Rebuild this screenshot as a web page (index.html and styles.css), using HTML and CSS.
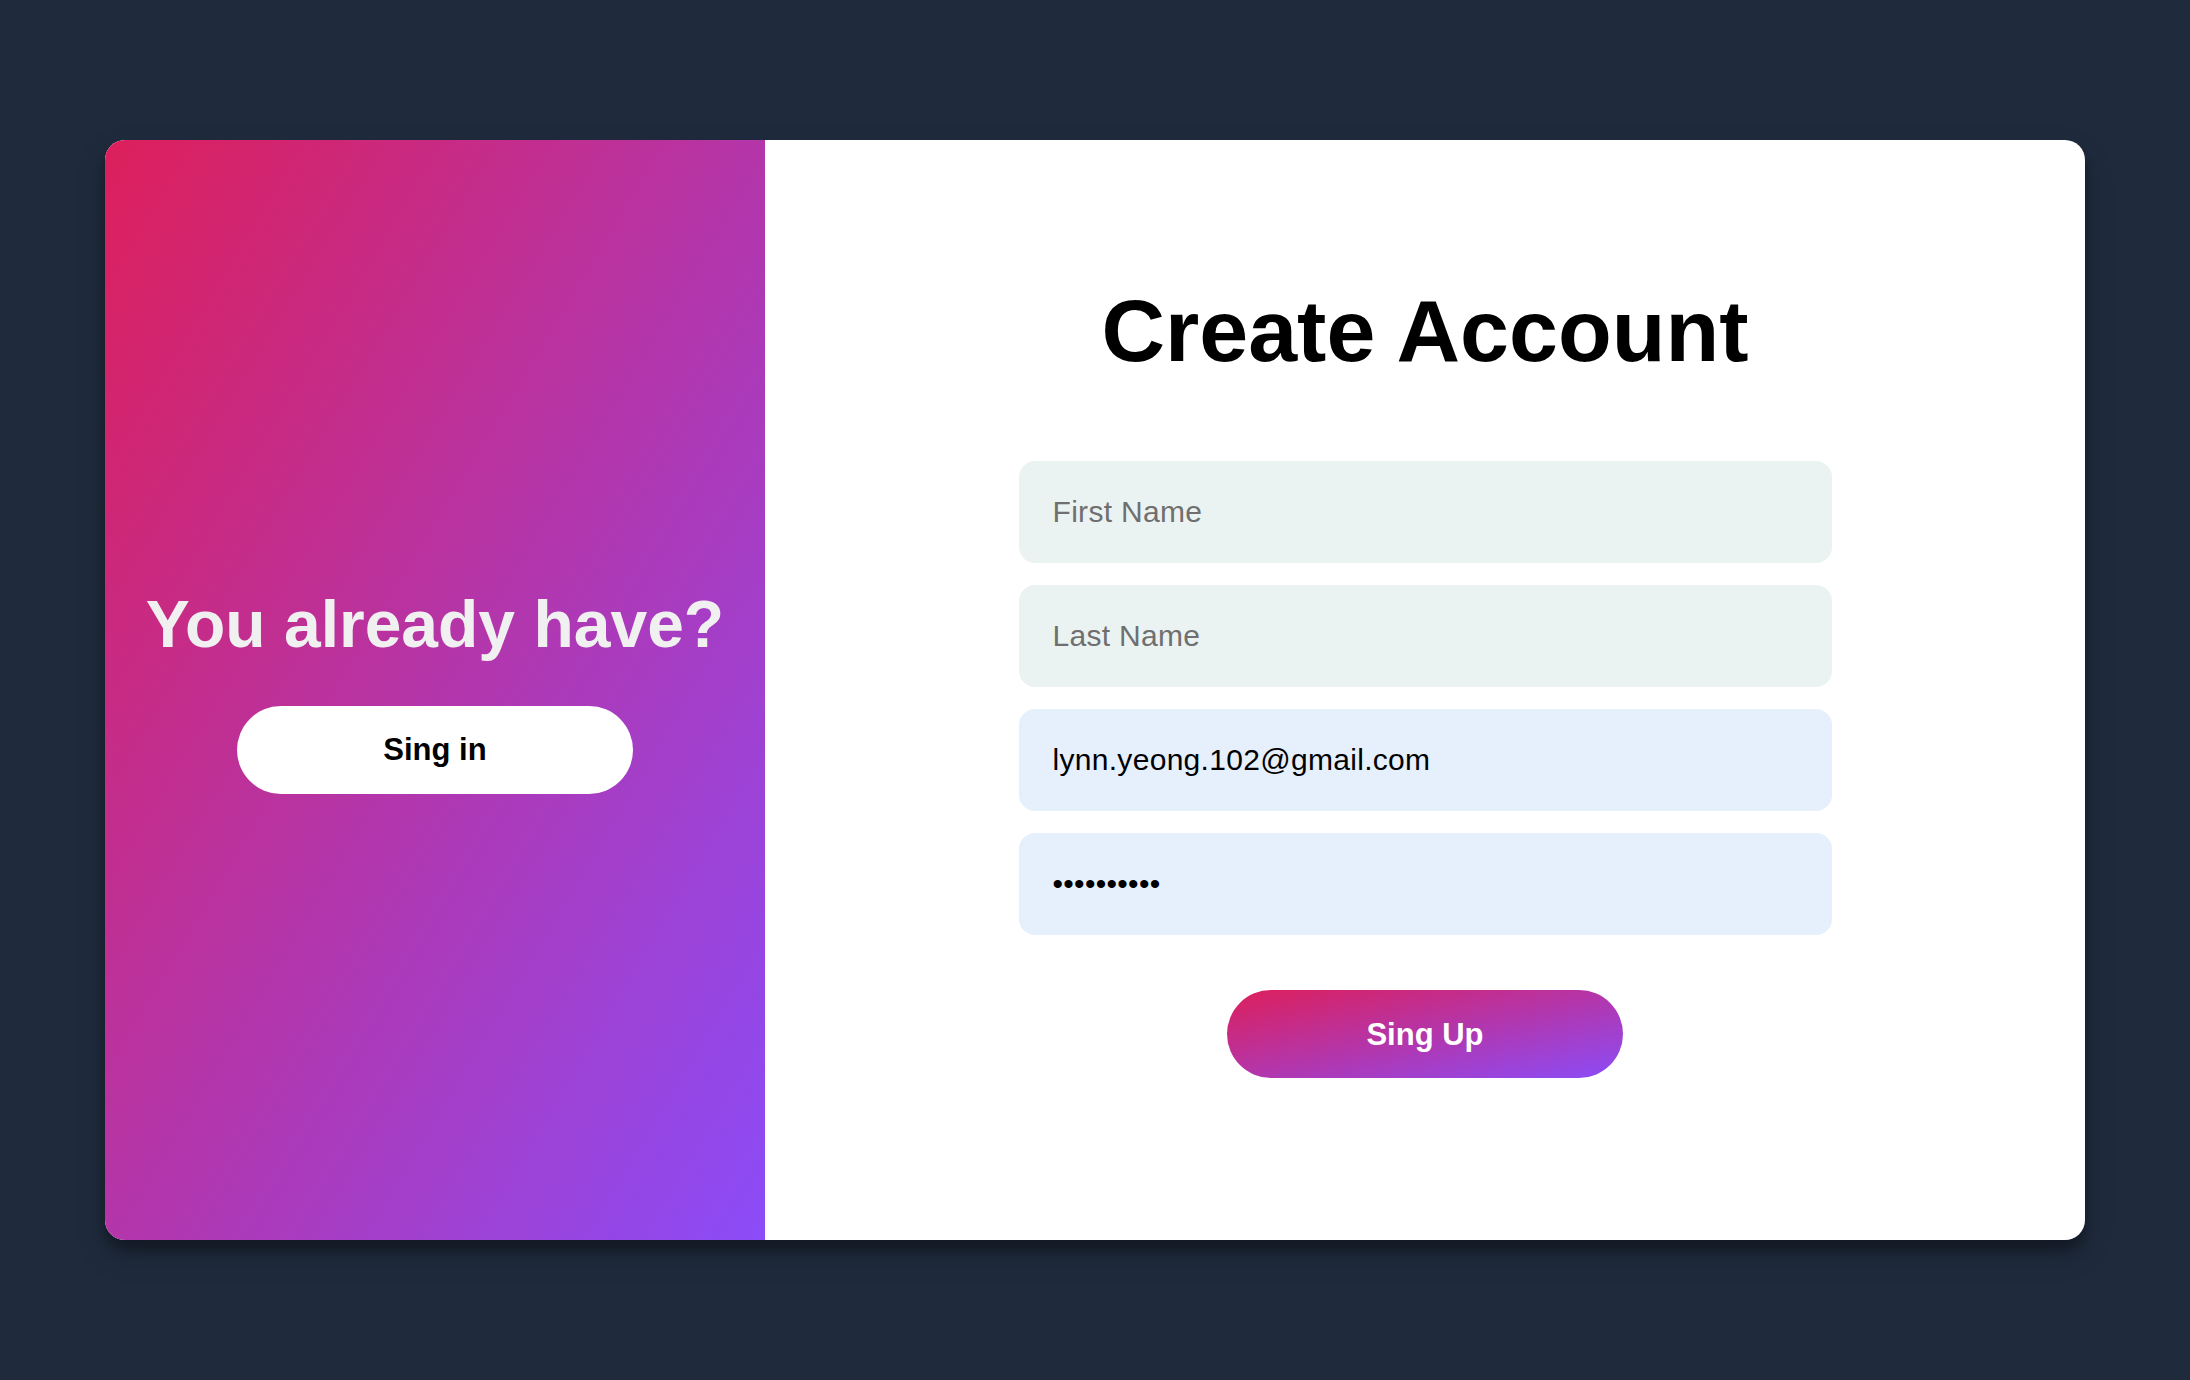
FILE: index.html
```html
<!DOCTYPE html>
<html lang="en">
<head>
<meta charset="utf-8">
<title>Create Account</title>
<link rel="stylesheet" href="styles.css">
</head>
<body>
  <main class="card">
    <section class="side">
      <h2 class="side-title">You already have?</h2>
      <button class="btn btn-light" type="button">Sing in</button>
    </section>
    <section class="form-panel">
      <h1 class="form-title">Create Account</h1>
      <form class="form">
        <input class="field field-plain" type="text" placeholder="First Name">
        <input class="field field-plain" type="text" placeholder="Last Name">
        <input class="field field-filled" type="email" value="lynn.yeong.102@gmail.com">
        <input class="field field-filled" type="password" value="0123456789">
        <button class="btn btn-gradient" type="button">Sing Up</button>
      </form>
    </section>
  </main>
</body>
</html>
```
FILE: styles.css
```css
* {
  box-sizing: border-box;
}

html, body {
  margin: 0;
  padding: 0;
}

body {
  min-height: 100vh;
  background: #1f2b3d;
  display: flex;
  align-items: center;
  justify-content: center;
  font-family: "Liberation Sans", Arial, Helvetica, sans-serif;
}

.card {
  width: 1980px;
  height: 1100px;
  display: flex;
  background: #ffffff;
  border-radius: 20px;
  overflow: hidden;
  box-shadow: 0 14px 28px rgba(0, 0, 0, 0.25), 0 10px 10px rgba(0, 0, 0, 0.22);
}

.side {
  width: 660px;
  flex: none;
  display: flex;
  flex-direction: column;
  align-items: center;
  justify-content: center;
  background: linear-gradient(to bottom right, #dd1f5b, #8b4cf8);
}

.side-title {
  margin: 0;
  font-size: 66px;
  line-height: 76px;
  font-weight: 700;
  color: #f0f0f0;
}

.btn {
  width: 396px;
  height: 88px;
  border: none;
  border-radius: 44px;
  font-family: "Liberation Sans", Arial, Helvetica, sans-serif;
  font-size: 31px;
  font-weight: 700;
  cursor: pointer;
  padding: 0;
}

.btn-light {
  margin-top: 44px;
  background: #ffffff;
  color: #000000;
}

.form-panel {
  flex: 1;
  display: flex;
  flex-direction: column;
  align-items: center;
  padding-top: 140px;
}

.form-title {
  margin: 0;
  font-size: 88px;
  line-height: 101px;
  font-weight: 700;
  color: #000000;
}

.form {
  margin-top: 80px;
  display: flex;
  flex-direction: column;
  align-items: center;
  gap: 22px;
}

.field {
  width: 813px;
  height: 102px;
  border: none;
  outline: none;
  border-radius: 16px;
  padding: 0 34px;
  font-family: "Liberation Sans", Arial, Helvetica, sans-serif;
  font-size: 30px;
  letter-spacing: 0.3px;
  color: #000000;
}

.field::placeholder {
  color: #6f6f6f;
}

.field-plain {
  background: #ebf3f2;
}

.field-filled {
  background: #e6effc;
}

.btn-gradient {
  margin-top: 33px;
  padding-top: 2px;
  background: linear-gradient(to bottom right, #dd1f5b, #8b4cf8);
  color: #ffffff;
}
```
